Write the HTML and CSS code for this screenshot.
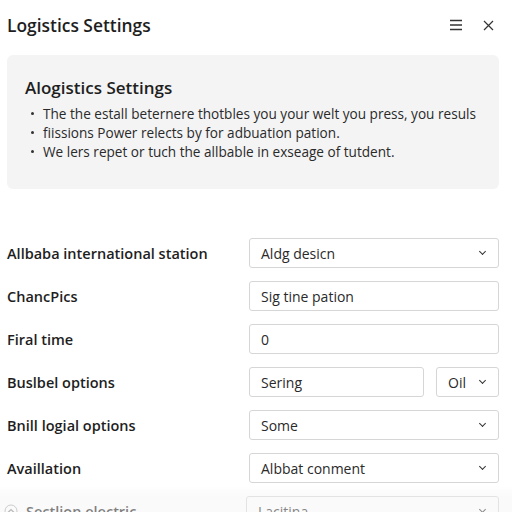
FILE: index.html
```html
<!DOCTYPE html>
<html lang="en">
<head>
    <meta charset="UTF-8">
    <meta name="viewport" content="width=device-width, initial-scale=1.0">
    <title>Logistics Settings</title>

    <link rel="stylesheet" href="styles.css">
</head>
<body>
    <div class="main">
        <div class="header">
            <h1>Logistics Settings</h1>
            <div class="tools">
                <svg width="14" height="12" viewBox="0 0 14 12"><path d="M1 1.5h12M1 6h12M1 10.5h12" stroke="#333" stroke-width="1.5"/></svg>
                <svg width="11" height="11" viewBox="0 0 11 11"><path d="M1 1l9 9M10 1l-9 9" stroke="#333" stroke-width="1.2"/></svg>
            </div>
        </div>

        <div class="info">
            <h2>Alogistics Settings</h2>
            <ul>
                <li>The the estall beternere thotbles you your welt you press, you resuls</li>
                <li>fiissions Power relects by for adbuation pation.</li>
                <li>We lers repet or tuch the allbable in exseage of tutdent.</li>
            </ul>
        </div>

        <div class="form">
            <div class="row">
                <label>Allbaba international station</label>
                <div class="field select">Aldg desicn</div>
            </div>
            <div class="row">
                <label>ChancPics</label>
                <div class="field">Sig tine pation</div>
            </div>
            <div class="row">
                <label>Firal time</label>
                <div class="field">0</div>
            </div>
            <div class="row">
                <label>Buslbel options</label>
                <div class="pair">
                    <div class="field">Sering</div>
                    <div class="field select small">Oil</div>
                </div>
            </div>
            <div class="row">
                <label>Bnill logial options</label>
                <div class="field select">Some</div>
            </div>
            <div class="row">
                <label>Availlation</label>
                <div class="field select">Albbat conment</div>
            </div>
            <div class="row">
                <label class="up">
                    <svg width="14" height="14" viewBox="0 0 14 14"><circle cx="7" cy="7" r="6" fill="none" stroke="#aaa"/><path d="M4 8.5l3-3 3 3" fill="none" stroke="#888" stroke-width="1.2"/></svg>
                    Sectlion electric
                </label>
                <div class="field select">Lacitina</div>
            </div>
        </div>
    </div>

    <div class="fade"></div>
</body>
</html>
```

FILE: styles.css
```css
*{
    font-family: "Open Sans", "Noto Sans", sans-serif;
    box-sizing: border-box;
}
body{
    margin: 0;
    background-color: white;
    color: #1e1e1e;
    overflow: hidden;
}
.main{
    padding: 0 13px 0 7px;
}
.header{
    height: 50px;
    margin-bottom: 5px;
    display: flex;
    align-items: center;
    justify-content: space-between;
}
.header h1{
    margin: 0;
    font-size: 17.4px;
    font-weight: 600;
}
.tools{
    display: flex;
    align-items: center;
    gap: 20px;
    padding-right: 5px;
}
.info{
    background-color: #f4f4f4;
    border-radius: 6px;
    padding: 21px 18px 28px 18px;
}
.info h2{
    margin: 0 0 5px 0;
    font-size: 17px;
    font-weight: 600;
}
.info ul{
    margin: 0;
    padding-left: 6px;
    list-style: none;
}
.info li{
    display: flex;
    align-items: center;
    gap: 9px;
    font-size: 13.6px;
    line-height: 19px;
    color: #2a2a2a;
}
.info li::before{
    content: "";
    flex: none;
    width: 3px;
    height: 3px;
    border-radius: 50%;
    background-color: #333;
}
.form{
    margin-top: 49px;
    display: flex;
    flex-direction: column;
    gap: 13px;
}
.row{
    display: flex;
    align-items: center;
}
.row label{
    width: 242px;
    font-size: 14.5px;
    font-weight: 600;
}
.field{
    flex: 1;
    height: 30px;
    border: 1px solid #d6d6d6;
    border-radius: 3px;
    padding: 0 11px;
    display: flex;
    align-items: center;
    font-size: 14px;
    color: #2a2a2a;
    background-color: white;
}
.select{
    justify-content: space-between;
}
.select::after{
    content: "";
    width: 4px;
    height: 4px;
    border-right: 1.6px solid #333;
    border-bottom: 1.6px solid #333;
    transform: rotate(45deg);
    margin: -3px 2px 0 0;
}
.pair{
    flex: 1;
    display: flex;
    gap: 12px;
}
.small{
    flex: 0 0 63px;
}
.up{
    display: flex;
    align-items: center;
    gap: 8px;
    margin-left: -3px;
}
.fade{
    position: fixed;
    left: 0;
    right: 0;
    bottom: 0;
    height: 26px;
    background: linear-gradient(rgba(255,255,255,0), rgba(244,244,244,0.45) 40%);
}
```
